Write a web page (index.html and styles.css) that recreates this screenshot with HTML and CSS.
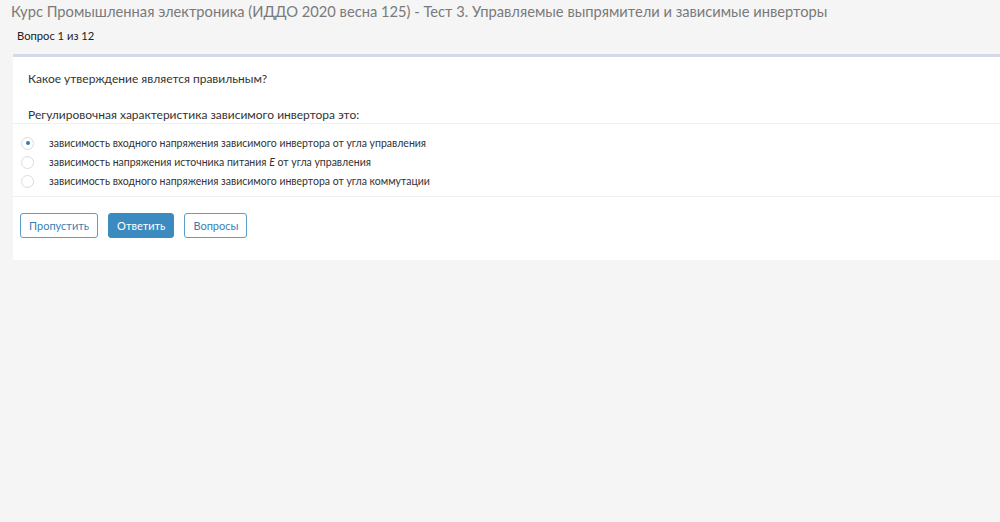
FILE: index.html
```html
<!DOCTYPE html>
<html lang="ru">
<head>
  <meta charset="UTF-8">
  <title>Тест 3</title>
  <link rel="stylesheet" href="styles.css">
</head>
<body>
  <div class="page">
    <h1 class="course-title">Курс Промышленная электроника (ИДДО 2020 весна 125) - Тест 3. Управляемые выпрямители и зависимые инверторы</h1>
    <div class="counter">Вопрос 1 из 12</div>

    <div class="card">
      <div class="question">
        <p class="q-lead">Какое утверждение является правильным?</p>
        <p class="q-text">Регулировочная характеристика зависимого инвертора это:</p>
      </div>

      <div class="answers">
        <label class="answer">
          <span class="radio checked"></span>
          <span>зависимость входного напряжения зависимого инвертора от угла управления</span>
        </label>
        <label class="answer">
          <span class="radio"></span>
          <span>зависимость напряжения источника питания <i>E</i> от угла управления</span>
        </label>
        <label class="answer">
          <span class="radio"></span>
          <span>зависимость входного напряжения зависимого инвертора от угла коммутации</span>
        </label>
      </div>

      <div class="actions">
        <button class="btn">Пропустить</button>
        <button class="btn primary">Ответить</button>
        <button class="btn">Вопросы</button>
      </div>
    </div>
  </div>
</body>
</html>
```

FILE: styles.css
```css
html, body {
  margin: 0;
  height: 100%;
}

body {
  font-family: Lato, "Open Sans", sans-serif;
  background: #f5f5f5;
  color: #333;
}

.page {
  padding: 2px 0 0 13px;
}

.course-title {
  margin: 0 0 0 -2px;
  font-size: 14.7px;
  font-weight: normal;
  line-height: 19px;
  color: #7a7a7a;
}

.counter {
  margin: 8px 0 0 4px;
  font-size: 11.2px;
  line-height: 14px;
  color: #222;
}

.card {
  margin-top: 11px;
  background: #fff;
  border-top: 3px solid #d5d9e6;
}

.question {
  padding: 14px 15px 0 15px;
  border-bottom: 1px solid #f0f0f0;
}

.question p {
  margin: 0;
  font-size: 12px;
  line-height: 16px;
  color: #333;
}

.q-lead {
  padding-bottom: 20px;
}

.answers {
  display: flex;
  flex-direction: column;
  gap: 5px;
  padding: 12px 0 8px 8px;
  border-bottom: 1px solid #f0f0f0;
}

.answer {
  display: flex;
  align-items: center;
  gap: 15px;
  font-size: 10.5px;
  line-height: 14px;
  color: #333;
}

.radio {
  width: 13px;
  height: 13px;
  border: 1px solid #dcdcdc;
  border-radius: 50%;
  box-sizing: border-box;
  position: relative;
  flex: none;
}

.radio.checked::after {
  content: "";
  position: absolute;
  left: 3.5px;
  top: 3.5px;
  width: 4px;
  height: 4px;
  border-radius: 50%;
  background: #2d7ec0;
}

.actions {
  display: flex;
  gap: 10px;
  padding: 16px 7px 22px 7px;
}

.btn {
  font-family: inherit;
  font-size: 11px;
  height: 25px;
  padding: 0 8px;
  border: 1px solid #5b9fc8;
  border-radius: 3px;
  background: #fff;
  color: #3a7fb3;
  cursor: pointer;
}

.btn.primary {
  background: #3b8bc0;
  border-color: #3b8bc0;
  color: #fff;
}
```
